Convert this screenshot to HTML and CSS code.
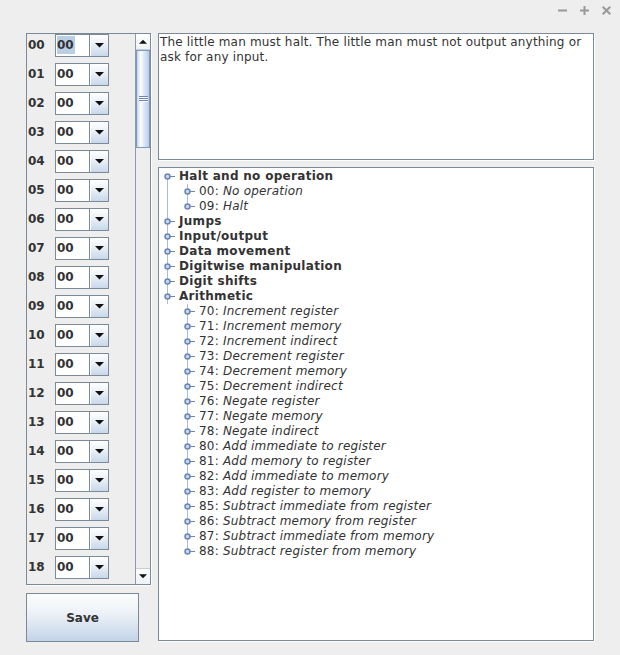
FILE: index.html
```html
<!DOCTYPE html>
<html>
<head>
<meta charset="utf-8">
<link rel="stylesheet" href="styles.css">
</head>
<body>
<svg class="defs" width="0" height="0" aria-hidden="true">
  <symbol id="h-mid" viewBox="0 0 20 15"><path d="M8.5 0V15" stroke="#a9bdd8"/><path d="M10 7.5H16" stroke="#6a85b8"/><circle cx="8.5" cy="7.5" r="2.5" fill="#c9d7ea" stroke="#6a85b8" stroke-width="1.5"/></symbol>
  <symbol id="h-first" viewBox="0 0 20 15"><path d="M8.5 7.5V15" stroke="#a9bdd8"/><path d="M10 7.5H16" stroke="#6a85b8"/><circle cx="8.5" cy="7.5" r="2.5" fill="#c9d7ea" stroke="#6a85b8" stroke-width="1.5"/></symbol>
  <symbol id="h-last" viewBox="0 0 20 15"><path d="M8.5 0V7.5" stroke="#a9bdd8"/><path d="M10 7.5H16" stroke="#6a85b8"/><circle cx="8.5" cy="7.5" r="2.5" fill="#c9d7ea" stroke="#6a85b8" stroke-width="1.5"/></symbol>
  <symbol id="arrow-down" viewBox="0 0 9 5"><path d="M0 0H9L4.5 4.5Z" fill="#111"/></symbol>
</svg>

<div class="titlebar">
  <svg viewBox="0 0 9 9"><path d="M0 4.5H9" stroke="#999999" stroke-width="2"/></svg>
  <svg viewBox="0 0 9 9"><path d="M0 4.5H9M4.5 0V9" stroke="#999999" stroke-width="2"/></svg>
  <svg viewBox="0 0 9 9"><path d="M0.7 0.7L8.3 8.3M8.3 0.7L0.7 8.3" stroke="#999999" stroke-width="2"/></svg>
</div>

<div class="main">
  <div class="left">
    <div class="listbox">
      <div class="rows">
        <div class="row"><span class="lbl">00</span><div class="combo"><span class="val"><span class="sel">00</span></span><span class="btn"><svg class="arr"><use href="#arrow-down"/></svg></span></div></div>
        <div class="row"><span class="lbl">01</span><div class="combo"><span class="val">00</span><span class="btn"><svg class="arr"><use href="#arrow-down"/></svg></span></div></div>
        <div class="row"><span class="lbl">02</span><div class="combo"><span class="val">00</span><span class="btn"><svg class="arr"><use href="#arrow-down"/></svg></span></div></div>
        <div class="row"><span class="lbl">03</span><div class="combo"><span class="val">00</span><span class="btn"><svg class="arr"><use href="#arrow-down"/></svg></span></div></div>
        <div class="row"><span class="lbl">04</span><div class="combo"><span class="val">00</span><span class="btn"><svg class="arr"><use href="#arrow-down"/></svg></span></div></div>
        <div class="row"><span class="lbl">05</span><div class="combo"><span class="val">00</span><span class="btn"><svg class="arr"><use href="#arrow-down"/></svg></span></div></div>
        <div class="row"><span class="lbl">06</span><div class="combo"><span class="val">00</span><span class="btn"><svg class="arr"><use href="#arrow-down"/></svg></span></div></div>
        <div class="row"><span class="lbl">07</span><div class="combo"><span class="val">00</span><span class="btn"><svg class="arr"><use href="#arrow-down"/></svg></span></div></div>
        <div class="row"><span class="lbl">08</span><div class="combo"><span class="val">00</span><span class="btn"><svg class="arr"><use href="#arrow-down"/></svg></span></div></div>
        <div class="row"><span class="lbl">09</span><div class="combo"><span class="val">00</span><span class="btn"><svg class="arr"><use href="#arrow-down"/></svg></span></div></div>
        <div class="row"><span class="lbl">10</span><div class="combo"><span class="val">00</span><span class="btn"><svg class="arr"><use href="#arrow-down"/></svg></span></div></div>
        <div class="row"><span class="lbl">11</span><div class="combo"><span class="val">00</span><span class="btn"><svg class="arr"><use href="#arrow-down"/></svg></span></div></div>
        <div class="row"><span class="lbl">12</span><div class="combo"><span class="val">00</span><span class="btn"><svg class="arr"><use href="#arrow-down"/></svg></span></div></div>
        <div class="row"><span class="lbl">13</span><div class="combo"><span class="val">00</span><span class="btn"><svg class="arr"><use href="#arrow-down"/></svg></span></div></div>
        <div class="row"><span class="lbl">14</span><div class="combo"><span class="val">00</span><span class="btn"><svg class="arr"><use href="#arrow-down"/></svg></span></div></div>
        <div class="row"><span class="lbl">15</span><div class="combo"><span class="val">00</span><span class="btn"><svg class="arr"><use href="#arrow-down"/></svg></span></div></div>
        <div class="row"><span class="lbl">16</span><div class="combo"><span class="val">00</span><span class="btn"><svg class="arr"><use href="#arrow-down"/></svg></span></div></div>
        <div class="row"><span class="lbl">17</span><div class="combo"><span class="val">00</span><span class="btn"><svg class="arr"><use href="#arrow-down"/></svg></span></div></div>
        <div class="row"><span class="lbl">18</span><div class="combo"><span class="val">00</span><span class="btn"><svg class="arr"><use href="#arrow-down"/></svg></span></div></div>
      </div>
      <div class="vscroll">
        <div class="sbtn"><svg class="sarr up"><use href="#arrow-down"/></svg></div>
        <div class="thumb"><svg class="grip" viewBox="0 0 9 6"><path d="M0 0.5H9M0 2.5H9M0 4.5H9" stroke="#6a85b8"/><path d="M0 1.5H9M0 3.5H9M0 5.5H9" stroke="#ffffff"/></svg></div>
        <div class="track"></div>
        <div class="sbtn"><svg class="sarr"><use href="#arrow-down"/></svg></div>
      </div>
    </div>
    <button class="save">Save</button>
  </div>

  <div class="right">
    <div class="textarea">The little man must halt. The little man must not output anything or ask for any input.</div>
    <div class="tree">
      <div class="tr"><svg class="h"><use href="#h-first"/></svg><b>Halt and no operation</b></div>
      <div class="tr"><span class="guide"></span><svg class="h"><use href="#h-mid"/></svg><span>00: <i>No operation</i></span></div>
      <div class="tr"><span class="guide"></span><svg class="h"><use href="#h-last"/></svg><span>09: <i>Halt</i></span></div>
      <div class="tr"><svg class="h"><use href="#h-mid"/></svg><b>Jumps</b></div>
      <div class="tr"><svg class="h"><use href="#h-mid"/></svg><b>Input/output</b></div>
      <div class="tr"><svg class="h"><use href="#h-mid"/></svg><b>Data movement</b></div>
      <div class="tr"><svg class="h"><use href="#h-mid"/></svg><b>Digitwise manipulation</b></div>
      <div class="tr"><svg class="h"><use href="#h-mid"/></svg><b>Digit shifts</b></div>
      <div class="tr"><svg class="h"><use href="#h-mid"/></svg><b>Arithmetic</b></div>
      <div class="tr"><span class="guide blank"></span><svg class="h"><use href="#h-mid"/></svg><span>70: <i>Increment register</i></span></div>
      <div class="tr"><span class="guide blank"></span><svg class="h"><use href="#h-mid"/></svg><span>71: <i>Increment memory</i></span></div>
      <div class="tr"><span class="guide blank"></span><svg class="h"><use href="#h-mid"/></svg><span>72: <i>Increment indirect</i></span></div>
      <div class="tr"><span class="guide blank"></span><svg class="h"><use href="#h-mid"/></svg><span>73: <i>Decrement register</i></span></div>
      <div class="tr"><span class="guide blank"></span><svg class="h"><use href="#h-mid"/></svg><span>74: <i>Decrement memory</i></span></div>
      <div class="tr"><span class="guide blank"></span><svg class="h"><use href="#h-mid"/></svg><span>75: <i>Decrement indirect</i></span></div>
      <div class="tr"><span class="guide blank"></span><svg class="h"><use href="#h-mid"/></svg><span>76: <i>Negate register</i></span></div>
      <div class="tr"><span class="guide blank"></span><svg class="h"><use href="#h-mid"/></svg><span>77: <i>Negate memory</i></span></div>
      <div class="tr"><span class="guide blank"></span><svg class="h"><use href="#h-mid"/></svg><span>78: <i>Negate indirect</i></span></div>
      <div class="tr"><span class="guide blank"></span><svg class="h"><use href="#h-mid"/></svg><span>80: <i>Add immediate to register</i></span></div>
      <div class="tr"><span class="guide blank"></span><svg class="h"><use href="#h-mid"/></svg><span>81: <i>Add memory to register</i></span></div>
      <div class="tr"><span class="guide blank"></span><svg class="h"><use href="#h-mid"/></svg><span>82: <i>Add immediate to memory</i></span></div>
      <div class="tr"><span class="guide blank"></span><svg class="h"><use href="#h-mid"/></svg><span>83: <i>Add register to memory</i></span></div>
      <div class="tr"><span class="guide blank"></span><svg class="h"><use href="#h-mid"/></svg><span>85: <i>Subtract immediate from register</i></span></div>
      <div class="tr"><span class="guide blank"></span><svg class="h"><use href="#h-mid"/></svg><span>86: <i>Subtract memory from register</i></span></div>
      <div class="tr"><span class="guide blank"></span><svg class="h"><use href="#h-mid"/></svg><span>87: <i>Subtract immediate from memory</i></span></div>
      <div class="tr"><span class="guide blank"></span><svg class="h"><use href="#h-last"/></svg><span>88: <i>Subtract register from memory</i></span></div>
    </div>
  </div>
</div>
</body>
</html>
```

FILE: styles.css
```css
html, body {
  margin: 0;
  padding: 0;
}
body {
  width: 620px;
  height: 655px;
  overflow: hidden;
  background: #eeeeee;
  font-family: "DejaVu Sans", "Noto Sans", sans-serif;
  font-size: 12px;
  color: #333333;
}
.defs {
  position: absolute;
  width: 0;
  height: 0;
}

.titlebar {
  height: 33px;
  box-sizing: border-box;
  display: flex;
  justify-content: flex-end;
  align-items: flex-start;
  gap: 13px;
  padding: 6px 9px 0 0;
}
.titlebar svg {
  width: 9px;
  height: 9px;
}

.main {
  display: flex;
  gap: 7px;
  padding: 0 26px;
}

.left {
  width: 125px;
  display: flex;
  flex-direction: column;
}
.listbox {
  height: 552px;
  box-sizing: border-box;
  border: 1px solid #7a8a99;
  box-shadow: 1px 1px 0 #ffffff;
  display: flex;
}
.rows {
  flex: 1;
  overflow: hidden;
}
.row {
  height: 29px;
  display: flex;
  align-items: flex-start;
}
.lbl {
  width: 28px;
  box-sizing: border-box;
  padding-left: 1px;
  line-height: 23px;
  font-weight: bold;
}
.combo {
  width: 54px;
  height: 23px;
  box-sizing: border-box;
  border: 1px solid #7a8a99;
  background: #ffffff;
  display: flex;
}
.val {
  width: 33px;
  box-sizing: border-box;
  padding-left: 1px;
  line-height: 21px;
  font-weight: bold;
}
.sel {
  display: inline-block;
  background: #b8cfe5;
  line-height: 18px;
  padding-right: 1px;
  margin-top: 1px;
}
.btn {
  flex: 1;
  border-left: 1px solid #7a8a99;
  box-shadow: inset 1px 1px 0 #ffffff;
  background: linear-gradient(#ffffff, #eaf0f7 45%, #c8d8ea);
  display: flex;
  align-items: center;
  justify-content: center;
}
.arr {
  width: 9px;
  height: 5px;
}

.vscroll {
  width: 15px;
  box-sizing: border-box;
  border-left: 1px solid #8e9aa6;
  display: flex;
  flex-direction: column;
}
.sbtn {
  height: 16px;
  box-sizing: border-box;
  background: linear-gradient(#ffffff, #eef1f5);
  border-bottom: 1px solid #c8ced5;
  display: flex;
  align-items: center;
  justify-content: center;
}
.sbtn:last-child {
  border-bottom: none;
  border-top: 1px solid #c8ced5;
}
.sarr {
  width: 8px;
  height: 5px;
}
.sarr.up {
  transform: rotate(180deg);
}
.thumb {
  height: 98px;
  box-sizing: border-box;
  border: 1px solid #7d97c6;
  background: linear-gradient(to right, #c3d4e9 0%, #ffffff 30%, #e3ebf5 55%, #b8cde6 100%);
  display: flex;
  align-items: center;
  justify-content: center;
}
.grip {
  width: 9px;
  height: 6px;
}
.track {
  flex: 1;
  background: #eeeeee;
}

.save {
  margin-top: 8px;
  width: 113px;
  height: 49px;
  box-sizing: border-box;
  border: 1px solid #7a8a99;
  background: linear-gradient(#fbfcfd, #eef2f7 40%, #c3d4e8);
  font-family: "DejaVu Sans", "Noto Sans", sans-serif;
  font-size: 12px;
  font-weight: bold;
  color: #333333;
  padding: 0;
}

.right {
  flex: 1;
  display: flex;
  flex-direction: column;
  gap: 7px;
}
.textarea {
  height: 127px;
  box-sizing: border-box;
  border: 1px solid #7a8a99;
  box-shadow: 1px 1px 0 #ffffff;
  background: #ffffff;
  padding: 1px 1px 0;
  line-height: 15px;
  letter-spacing: 0.18px;
}
.tree {
  height: 474px;
  box-sizing: border-box;
  border: 1px solid #7a8a99;
  box-shadow: 1px 1px 0 #ffffff;
  background: #ffffff;
  padding-top: 1px;
}
.tr {
  height: 15px;
  line-height: 15px;
  display: flex;
  align-items: center;
  white-space: nowrap;
  letter-spacing: 0.2px;
}
.tr b {
  font-weight: bold;
  padding-left: 0;
  letter-spacing: 0.3px;
}
.h {
  width: 20px;
  height: 15px;
  flex: none;
}
.guide {
  width: 20px;
  height: 15px;
  flex: none;
  background: linear-gradient(#a9bdd8, #a9bdd8) no-repeat 8px 0 / 1px 100%;
}
.guide.blank {
  background: none;
}
.tr i {
  font-style: italic;
}
```
